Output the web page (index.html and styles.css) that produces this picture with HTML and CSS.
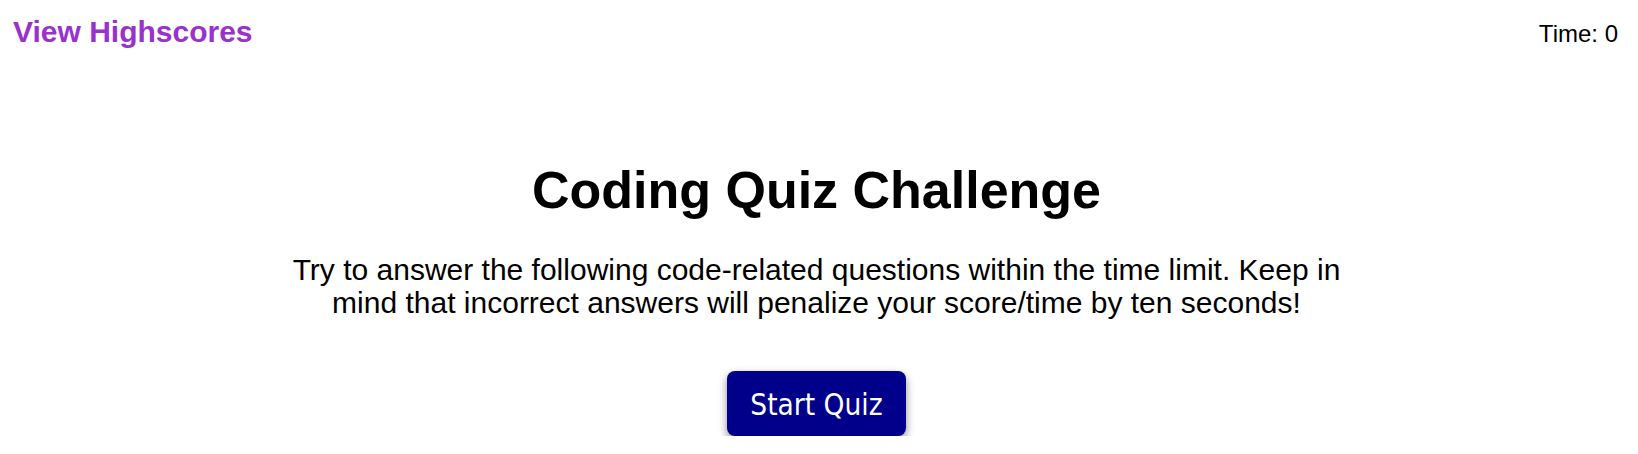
FILE: index.html
```html
<!DOCTYPE html>
<html lang="en">
<head>
<meta charset="utf-8">
<title>Coding Quiz Challenge</title>
<link rel="stylesheet" href="styles.css">
</head>
<body>
<header class="topbar">
  <a class="highscores" href="#">View Highscores</a>
  <div class="timer">Time: <span>0</span></div>
</header>
<main class="intro">
  <h1 class="title">Coding Quiz Challenge</h1>
  <p class="desc">Try to answer the following code-related questions within the time limit. Keep in mind that incorrect answers will penalize your score/time by ten seconds!</p>
  <button class="start-btn" type="button">Start Quiz</button>
</main>
</body>
</html>
```
FILE: styles.css
```css
html, body {
  margin: 0;
  padding: 0;
  background: #ffffff;
}
body {
  font-family: "Liberation Sans", Arial, sans-serif;
  color: #000;
}
.topbar {
  display: flex;
  justify-content: space-between;
  align-items: baseline;
  padding: 15px 20px 0 13px;
}
.highscores {
  font-size: 30px;
  font-weight: bold;
  color: #9932cc;
  text-decoration: none;
}
.timer {
  font-size: 24px;
}
.intro {
  display: flex;
  flex-direction: column;
  align-items: center;
  text-align: center;
  padding: 111px 5px 0 0;
}
.title {
  margin: 0 0 33px;
  font-size: 52px;
  font-weight: bold;
}
.desc {
  margin: 0 0 51px;
  max-width: 1080px;
  font-size: 30px;
  line-height: 33.3px;
}
.start-btn {
  font-family: "DejaVu Sans Condensed", "DejaVu Sans", sans-serif;
  font-stretch: condensed;
  font-size: 29.5px;
  line-height: 35px;
  padding: 17px 23px 13px;
  color: #fff;
  background: #00008b;
  border: none;
  border-radius: 8px;
  box-shadow: 0 4px 9px rgba(0, 0, 0, 0.45);
  cursor: pointer;
}
```
